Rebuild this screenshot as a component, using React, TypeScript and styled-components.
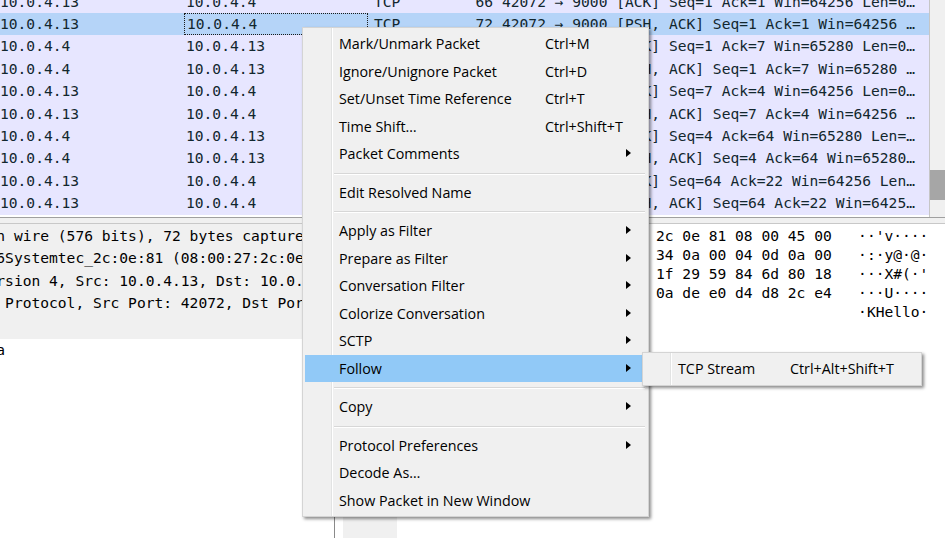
import styled, { createGlobalStyle } from "styled-components";

type Packet = {
  src: string;
  dst: string;
  len: string;
  info: string;
};

type MenuEntry =
  | { kind: "item"; label: string; shortcut?: string; sub?: boolean; active?: boolean }
  | { kind: "sep" };

const packets: Packet[] = [
  { src: "10.0.4.13", dst: "10.0.4.4", len: "66", info: "42072 → 9000 [ACK] Seq=1 Ack=1 Win=64256 Len=0…" },
  { src: "10.0.4.13", dst: "10.0.4.4", len: "72", info: "42072 → 9000 [PSH, ACK] Seq=1 Ack=1 Win=64256 …" },
  { src: "10.0.4.4", dst: "10.0.4.13", len: "66", info: "9000 → 42072 [ACK] Seq=1 Ack=7 Win=65280 Len=0…" },
  { src: "10.0.4.4", dst: "10.0.4.13", len: "69", info: "9000 → 42072 [PSH, ACK] Seq=1 Ack=7 Win=65280 …" },
  { src: "10.0.4.13", dst: "10.0.4.4", len: "66", info: "42072 → 9000 [ACK] Seq=7 Ack=4 Win=64256 Len=0…" },
  { src: "10.0.4.13", dst: "10.0.4.4", len: "126", info: "42072 → 9000 [PSH, ACK] Seq=7 Ack=4 Win=64256 …" },
  { src: "10.0.4.4", dst: "10.0.4.13", len: "66", info: "9000 → 42072 [ACK] Seq=4 Ack=64 Win=65280 Len=…" },
  { src: "10.0.4.4", dst: "10.0.4.13", len: "84", info: "9000 → 42072 [PSH, ACK] Seq=4 Ack=64 Win=65280…" },
  { src: "10.0.4.13", dst: "10.0.4.4", len: "66", info: "42072 → 9000 [ACK] Seq=64 Ack=22 Win=64256 Len…" },
  { src: "10.0.4.13", dst: "10.0.4.4", len: "85", info: "42072 → 9000 [PSH, ACK] Seq=64 Ack=22 Win=6425…" },
];

const SELECTED = 1;

const details = [
  "n wire (576 bits), 72 bytes captured (576 bits) on interface 0",
  "6Systemtec_2c:0e:81 (08:00:27:2c:0e:81), Dst: PcsCompu_76:4e:21",
  "rsion 4, Src: 10.0.4.13, Dst: 10.0.4.4",
  " Protocol, Src Port: 42072, Dst Port: 9000, Seq: 1, Ack: 1, Len: 6",
  "",
];

const bytes = [
  { offset: "0000", hex: "08 00 27 76 4e 21 08 00  27 2c 0e 81 08 00 45 00", ascii: "··'v····  ',····E·" },
  { offset: "0010", hex: "00 3a b1 79 40 00 40 06  63 34 0a 00 04 0d 0a 00", ascii: "·:·y@·@·  c4······" },
  { offset: "0020", hex: "04 04 a4 58 23 28 91 27  4d 1f 29 59 84 6d 80 18", ascii: "···X#(·'  M·)Y·m··" },
  { offset: "0030", hex: "01 f6 1c 55 00 00 01 01  08 0a de e0 d4 d8 2c e4", ascii: "···U····  ······,·" },
  { offset: "0040", hex: "8f 4b 48 65 6c 6c 6f 0a", ascii: "·KHello·" },
];

const mainMenu: MenuEntry[] = [
  { kind: "item", label: "Mark/Unmark Packet", shortcut: "Ctrl+M" },
  { kind: "item", label: "Ignore/Unignore Packet", shortcut: "Ctrl+D" },
  { kind: "item", label: "Set/Unset Time Reference", shortcut: "Ctrl+T" },
  { kind: "item", label: "Time Shift…", shortcut: "Ctrl+Shift+T" },
  { kind: "item", label: "Packet Comments", sub: true },
  { kind: "sep" },
  { kind: "item", label: "Edit Resolved Name" },
  { kind: "sep" },
  { kind: "item", label: "Apply as Filter", sub: true },
  { kind: "item", label: "Prepare as Filter", sub: true },
  { kind: "item", label: "Conversation Filter", sub: true },
  { kind: "item", label: "Colorize Conversation", sub: true },
  { kind: "item", label: "SCTP", sub: true },
  { kind: "item", label: "Follow", sub: true, active: true },
  { kind: "sep" },
  { kind: "item", label: "Copy", sub: true },
  { kind: "sep" },
  { kind: "item", label: "Protocol Preferences", sub: true },
  { kind: "item", label: "Decode As…" },
  { kind: "item", label: "Show Packet in New Window" },
];

const followMenu: MenuEntry[] = [
  { kind: "item", label: "TCP Stream", shortcut: "Ctrl+Alt+Shift+T" },
];

const ContextMenu = ({
  entries,
  left,
  top,
  width,
  labelWidth,
  gutter,
}: {
  entries: MenuEntry[];
  left: number;
  top: number;
  width: number;
  labelWidth: number;
  gutter: number;
}) => (
  <S.Menu $left={left} $top={top} $width={width} $gutter={gutter}>
    {entries.map((e, i) =>
      e.kind === "sep" ? (
        <S.Separator key={i} $gutter={gutter} />
      ) : (
        <S.MenuItem key={i} $active={!!e.active} $labelWidth={labelWidth} $gutter={gutter}>
          <span>{e.label}</span>
          <span>{e.shortcut ?? ""}</span>
          {e.sub && <S.Arrow />}
        </S.MenuItem>
      )
    )}
  </S.Menu>
);

const App = () => {
  return (
    <>
      <GlobalStyle />
      <S.Screen>
        <S.ListPane>
          <S.ListBody>
            <S.ListRows>
              {packets.map((p, i) => (
                <S.Row key={i} $selected={i === SELECTED}>
                  <S.Cell $pad={0}>{p.src}</S.Cell>
                  <S.Cell $pad={2} $focus={i === SELECTED}>
                    {p.dst}
                  </S.Cell>
                  <S.Cell $pad={6}>TCP</S.Cell>
                  <S.LenCell>{p.len}</S.LenCell>
                  <S.Cell $pad={9}>{p.info}</S.Cell>
                </S.Row>
              ))}
            </S.ListRows>
          </S.ListBody>
          <S.Scrollbar>
            <S.Thumb $top={170} />
          </S.Scrollbar>
        </S.ListPane>

        <S.Splitter />

        <S.Lower>
          <S.DetailsPane>
            <S.Tree>
              {details.map((d, i) => (
                <S.DetailLine key={i}>{d}</S.DetailLine>
              ))}
            </S.Tree>
            <S.DetailLine>a</S.DetailLine>
          </S.DetailsPane>

          <S.BytesPane>
            <S.OffsetCol>
              {bytes.map((b) => (
                <S.ByteLine key={b.offset}>{b.offset}</S.ByteLine>
              ))}
            </S.OffsetCol>
            <S.HexCol>
              {bytes.map((b) => (
                <S.ByteLine key={b.offset}>
                  {b.hex.padEnd(48, " ")}
                  {"   "}
                  {b.ascii}
                </S.ByteLine>
              ))}
            </S.HexCol>
          </S.BytesPane>
        </S.Lower>

        <ContextMenu entries={mainMenu} left={302} top={27} width={347} labelWidth={206} gutter={28} />
        <ContextMenu entries={followMenu} left={642} top={352} width={280} labelWidth={112} gutter={27} />
      </S.Screen>
    </>
  );
};

export default App;

const GlobalStyle = createGlobalStyle`
  html, body {
    margin: 0;
    padding: 0;
    background: #ffffff;
  }
  * {
    box-sizing: border-box;
  }
`;

const mono = `"DejaVu Sans Mono", "Liberation Mono", monospace`;

const S = {
  Screen: styled.div`
    position: relative;
    width: 945px;
    height: 538px;
    overflow: hidden;
    display: flex;
    flex-direction: column;
    font-family: ${mono};
    font-size: 14.6px;
    background: #ffffff;
  `,
  ListPane: styled.div`
    display: flex;
    height: 218px;
    border-bottom: 1px solid #a0a0a0;
    background: #ffffff;
  `,
  ListBody: styled.div`
    flex: 1;
    overflow: hidden;
  `,
  ListRows: styled.div`
    margin-top: -9.4px;
  `,
  Row: styled.div<{ $selected: boolean }>`
    display: grid;
    grid-template-columns: 184px 184px 98px 27px 1fr;
    height: 22.4px;
    line-height: 22.4px;
    color: #12272e;
    background: ${(p) => (p.$selected ? "#b5d4f8" : "#e7e6ff")};
  `,
  Cell: styled.div<{ $pad: number; $focus?: boolean }>`
    padding-left: ${(p) => p.$pad}px;
    white-space: pre;
    overflow: hidden;
    border: 1px dotted ${(p) => (p.$focus ? "#1a1a1a" : "transparent")};
    border-left-width: ${(p) => (p.$focus ? 1 : 0)}px;
    line-height: 20.4px;
  `,
  LenCell: styled.div`
    text-align: right;
    white-space: pre;
    overflow: visible;
    direction: rtl;
  `,
  Scrollbar: styled.div`
    width: 16px;
    flex-shrink: 0;
    background: #f0f0f0;
    border-left: 1px solid #c6c6c6;
  `,
  Thumb: styled.div<{ $top: number }>`
    margin-top: ${(p) => p.$top}px;
    height: 30px;
    background: #a6a6a6;
  `,
  Splitter: styled.div`
    height: 5px;
    background: #f0f0f0;
  `,
  Lower: styled.div`
    flex: 1;
    display: flex;
    border-top: 1px solid #c8c8c8;
    min-height: 0;
  `,
  DetailsPane: styled.div`
    width: 335px;
    flex-shrink: 0;
    overflow: hidden;
    background: #ffffff;
    border-right: 1px solid #8a8a8a;
    color: #000000;
    padding-top: 1px;
  `,
  Tree: styled.div`
    background: #f0f0f0;
    margin-top: -1px;
    padding: 1px 0 2px;
  `,
  DetailLine: styled.div`
    height: 22.4px;
    line-height: 22.4px;
    white-space: pre;
    text-indent: -3.7px;
  `,
  BytesPane: styled.div`
    flex: 1;
    display: flex;
    padding-left: 8px;
    background: #ffffff;
    color: #000000;
    overflow: hidden;
  `,
  OffsetCol: styled.div`
    width: 54px;
    flex-shrink: 0;
    background: #f0f0f0;
    padding: 1.5px 0 0 8px;
    color: #555555;
  `,
  HexCol: styled.div`
    margin-left: 13px;
    padding-top: 1.5px;
  `,
  ByteLine: styled.div`
    height: 19px;
    line-height: 19px;
    white-space: pre;
  `,
  Menu: styled.div<{ $left: number; $top: number; $width: number; $gutter: number }>`
    position: absolute;
    left: ${(p) => p.$left}px;
    top: ${(p) => p.$top}px;
    width: ${(p) => p.$width}px;
    padding: 2px;
    border: 1px solid #d4d4d4;
    box-shadow: 2px 2px 3px rgba(0, 0, 0, 0.45);
    font-family: "Open Sans", "Noto Sans", sans-serif;
    font-size: 14.3px;
    color: #000000;
    background: linear-gradient(
      to right,
      #f0f0f0 ${(p) => p.$gutter}px,
      #e2e3e3 ${(p) => p.$gutter}px,
      #e2e3e3 ${(p) => p.$gutter + 1}px,
      #ffffff ${(p) => p.$gutter + 1}px,
      #ffffff ${(p) => p.$gutter + 2}px,
      #f0f0f0 ${(p) => p.$gutter + 2}px
    );
  `,
  MenuItem: styled.div<{ $active: boolean; $labelWidth: number; $gutter: number }>`
    position: relative;
    display: grid;
    grid-template-columns: ${(p) => p.$labelWidth}px 1fr;
    align-items: center;
    height: 27.5px;
    padding-left: ${(p) => p.$gutter + 6}px;
    white-space: nowrap;
    background: ${(p) => (p.$active ? "#91c9f7" : "transparent")};
  `,
  Arrow: styled.span`
    position: absolute;
    right: 15px;
    top: 50%;
    margin-top: -4.5px;
    width: 0;
    height: 0;
    border-left: 5px solid #000000;
    border-top: 4.5px solid transparent;
    border-bottom: 4.5px solid transparent;
  `,
  Separator: styled.div<{ $gutter: number }>`
    height: 11px;
    margin-left: ${(p) => p.$gutter + 1}px;
    margin-right: 1px;
    padding-top: 5px;
    &::before {
      content: "";
      display: block;
      border-top: 1px solid #d7d7d7;
      border-bottom: 1px solid #ffffff;
    }
  `,
};
